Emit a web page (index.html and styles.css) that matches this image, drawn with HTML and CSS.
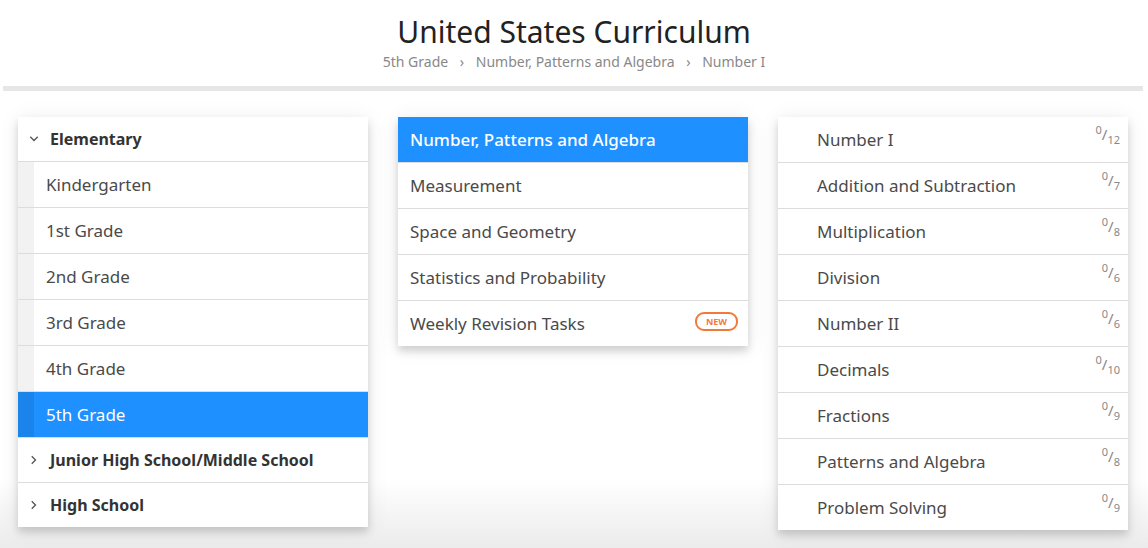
FILE: index.html
```html
<!DOCTYPE html>
<html lang="en">
<head>
    <meta charset="UTF-8">
    <meta name="viewport" content="width=device-width, initial-scale=1.0">
    <title>United States Curriculum</title>
    <link rel="stylesheet" href="styles.css">
</head>
<body>
    <div class="header">
        <h1>United States Curriculum</h1>
        <div class="crumbs">
            <span>5th Grade</span>
            <span class="sep">&rsaquo;</span>
            <span>Number, Patterns and Algebra</span>
            <span class="sep">&rsaquo;</span>
            <span>Number I</span>
        </div>
    </div>
    <div class="rule"></div>

    <div class="columns">
        <ul class="panel">
            <li class="group"><svg class="chev" viewBox="0 0 8 8"><path d="M1.5 2.5 L4 5 L6.5 2.5" /></svg>Elementary</li>
            <li class="sub">Kindergarten</li>
            <li class="sub">1st Grade</li>
            <li class="sub">2nd Grade</li>
            <li class="sub">3rd Grade</li>
            <li class="sub">4th Grade</li>
            <li class="sub active">5th Grade</li>
            <li class="group"><svg class="chev" viewBox="0 0 8 8"><path d="M2.5 1.5 L5 4 L2.5 6.5" /></svg>Junior High School/Middle School</li>
            <li class="group last"><svg class="chev" viewBox="0 0 8 8"><path d="M2.5 1.5 L5 4 L2.5 6.5" /></svg>High School</li>
        </ul>

        <ul class="panel">
            <li class="item active">Number, Patterns and Algebra</li>
            <li class="item">Measurement</li>
            <li class="item">Space and Geometry</li>
            <li class="item">Statistics and Probability</li>
            <li class="item last">Weekly Revision Tasks <span class="badge">NEW</span></li>
        </ul>

        <ul class="panel">
            <li class="skill">Number I <span class="frac"><sup>0</sup>/<sub>12</sub></span></li>
            <li class="skill">Addition and Subtraction <span class="frac"><sup>0</sup>/<sub>7</sub></span></li>
            <li class="skill">Multiplication <span class="frac"><sup>0</sup>/<sub>8</sub></span></li>
            <li class="skill">Division <span class="frac"><sup>0</sup>/<sub>6</sub></span></li>
            <li class="skill">Number II <span class="frac"><sup>0</sup>/<sub>6</sub></span></li>
            <li class="skill">Decimals <span class="frac"><sup>0</sup>/<sub>10</sub></span></li>
            <li class="skill">Fractions <span class="frac"><sup>0</sup>/<sub>9</sub></span></li>
            <li class="skill">Patterns and Algebra <span class="frac"><sup>0</sup>/<sub>8</sub></span></li>
            <li class="skill last">Problem Solving <span class="frac"><sup>0</sup>/<sub>9</sub></span></li>
        </ul>
    </div>
</body>
</html>
```

FILE: styles.css
```css
body {
    margin: 0;
    height: 548px;
    font-family: "Noto Sans", "Open Sans", sans-serif;
    color: #4a4a4a;
    background: linear-gradient(to bottom, #fff 0, #fff 480px, #ebebeb 548px);
    overflow: hidden;
}

.header {
    text-align: center;
    padding-top: 12px;
}

.header h1 {
    margin: 0;
    font-size: 30px;
    font-weight: 400;
    line-height: 40px;
    color: #222;
}

.crumbs {
    font-size: 14px;
    line-height: 20px;
    color: #888;
}

.crumbs .sep {
    margin: 0 8px;
}

.rule {
    height: 5px;
    margin: 14px 5px 0 3px;
    background-color: #e6e6e6;
}

.columns {
    display: flex;
    gap: 30px;
    padding: 26px 0 0 18px;
    align-items: flex-start;
}

.panel {
    list-style: none;
    margin: 0;
    padding: 0;
    width: 350px;
    background-color: #fff;
    box-shadow: 0 5px 8px rgba(0, 0, 0, 0.16), 0 2px 22px rgba(0, 0, 0, 0.07);
}

.panel li {
    display: flex;
    align-items: center;
    height: 45px;
    border-bottom: 1px solid #dcdcdc;
    font-size: 17px;
}

.panel li.last {
    border-bottom: none;
}

.group {
    font-size: 16px !important;
    font-weight: 700;
    color: #333;
    padding-left: 10px;
    height: 44px !important;
}

.chev {
    width: 12px;
    height: 12px;
    margin-right: 10px;
    fill: none;
    stroke: #555;
    stroke-width: 0.9;
}

.sub {
    padding-left: 28px;
    background: linear-gradient(to right, #f2f2f2 0, #f2f2f2 16px, #fff 16px);
}

.sub.active {
    color: #fff;
    background: linear-gradient(to right, #1a84ea 0, #1a84ea 16px, #1e90ff 16px);
}

.item {
    padding: 0 10px 0 12px;
}

.item.active {
    color: #fff;
    background-color: #1e90ff;
    font-weight: 500;
}

.badge {
    margin-left: auto;
    font-size: 9px;
    font-weight: 700;
    color: #f07a3a;
    border: 2px solid #f07a3a;
    border-radius: 9px;
    padding: 1px 9px;
    line-height: 13px;
    margin-top: -5px;
}

.skill {
    padding: 0 8px 0 39px;
}

.frac {
    margin-left: auto;
    margin-top: -10px;
    font-size: 15px;
    color: #888;
}

.frac sup,
.frac sub {
    font-size: 11px;
}
```
